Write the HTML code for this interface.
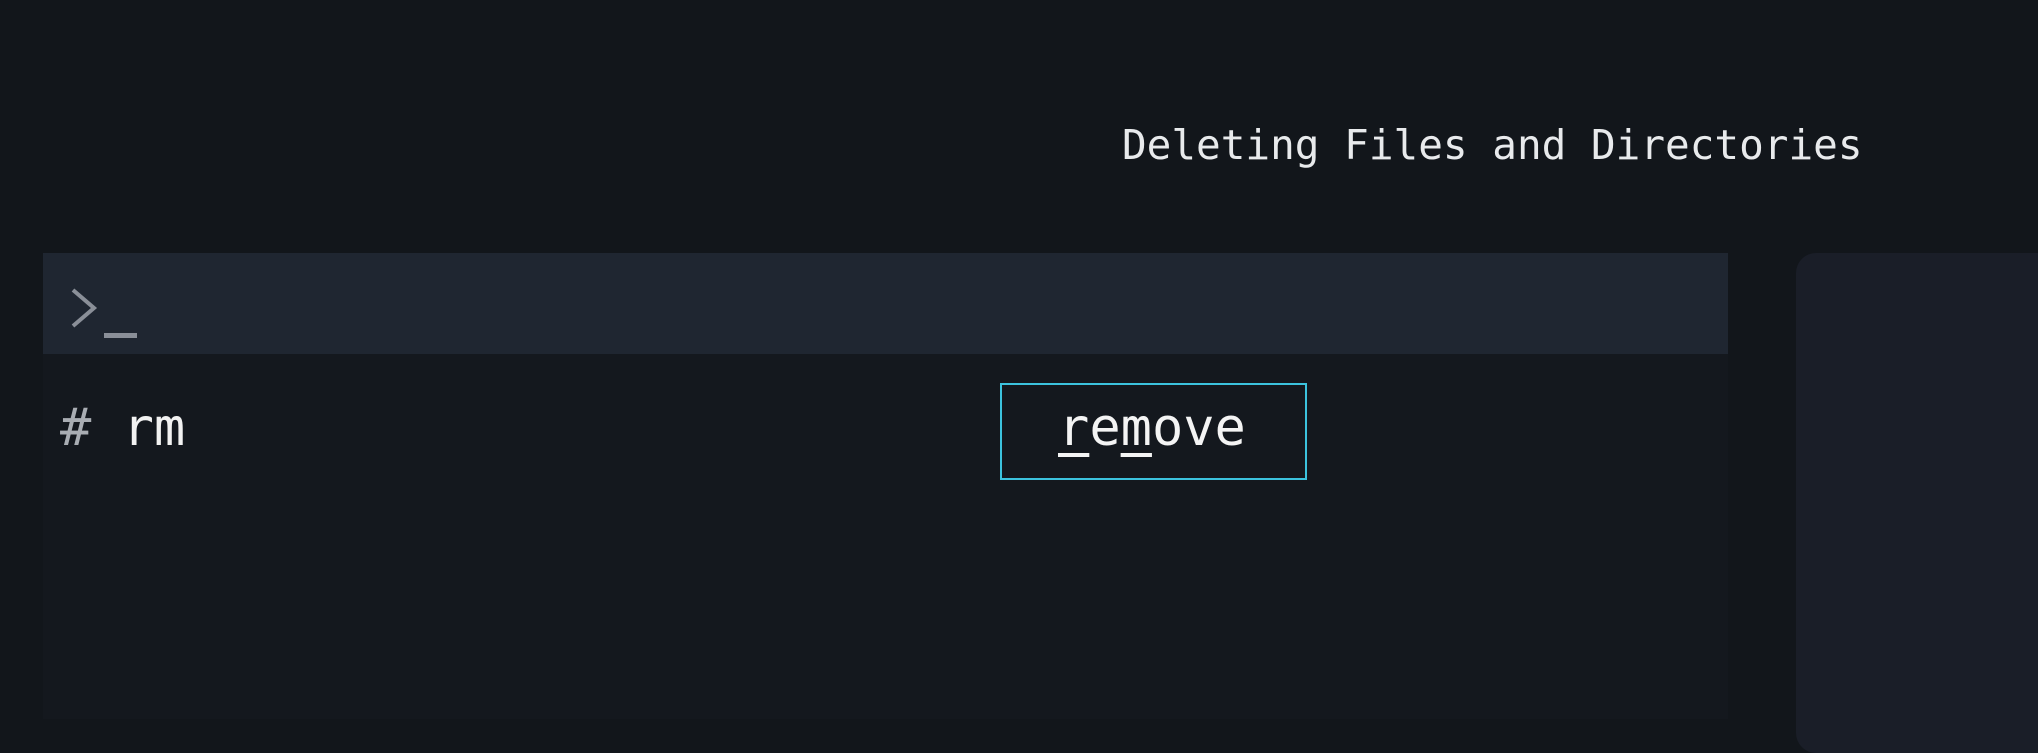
<!DOCTYPE html>
<html><head><meta charset="utf-8"><style>
html,body{margin:0;padding:0;width:2038px;height:719px;overflow:hidden;background:#12161b;font-family:"DejaVu Sans Mono","Liberation Mono",monospace;}
.abs{position:absolute;}
#left{left:43px;top:253px;width:1685px;height:466px;background:#14181e;}
#bar{left:43px;top:253px;width:1685px;height:101px;background:#1f2631;}
#panel{left:1796px;top:253px;width:300px;height:500px;background:#1a1e28;border-radius:20px;}
#title{left:1122px;top:120px;font-size:41px;color:#e8eaec;white-space:pre;line-height:50px;}
#rm{left:60px;top:398px;font-size:52px;color:#f2f2f2;line-height:60px;white-space:pre;}
#rm span{color:#a9adb3;}
#box{left:1000px;top:383px;width:303px;height:93px;border:2px solid #3cc3de;}
#rem{left:1058px;top:398px;font-size:52px;color:#f4f4f4;line-height:60px;}
#rem u{text-decoration-thickness:4px;text-underline-offset:8px;}
</style></head><body>
<div class="abs" id="left"></div>
<div class="abs" id="bar"></div>
<div class="abs" id="panel"></div>
<div class="abs" id="title">Deleting Files and Directories</div>
<svg class="abs" style="left:60px;top:285px" width="90" height="60" viewBox="0 0 90 60">
<path d="M13 5 L34 23 L13 41" fill="none" stroke="#8a8f98" stroke-width="4"/>
<rect x="44" y="48" width="33" height="5" fill="#8a8f98"/>
</svg>
<div class="abs" id="rm"><span>#</span> rm</div>
<div class="abs" id="box"></div>
<div class="abs" id="rem"><u>r</u>e<u>m</u>ove</div>
</body></html>
